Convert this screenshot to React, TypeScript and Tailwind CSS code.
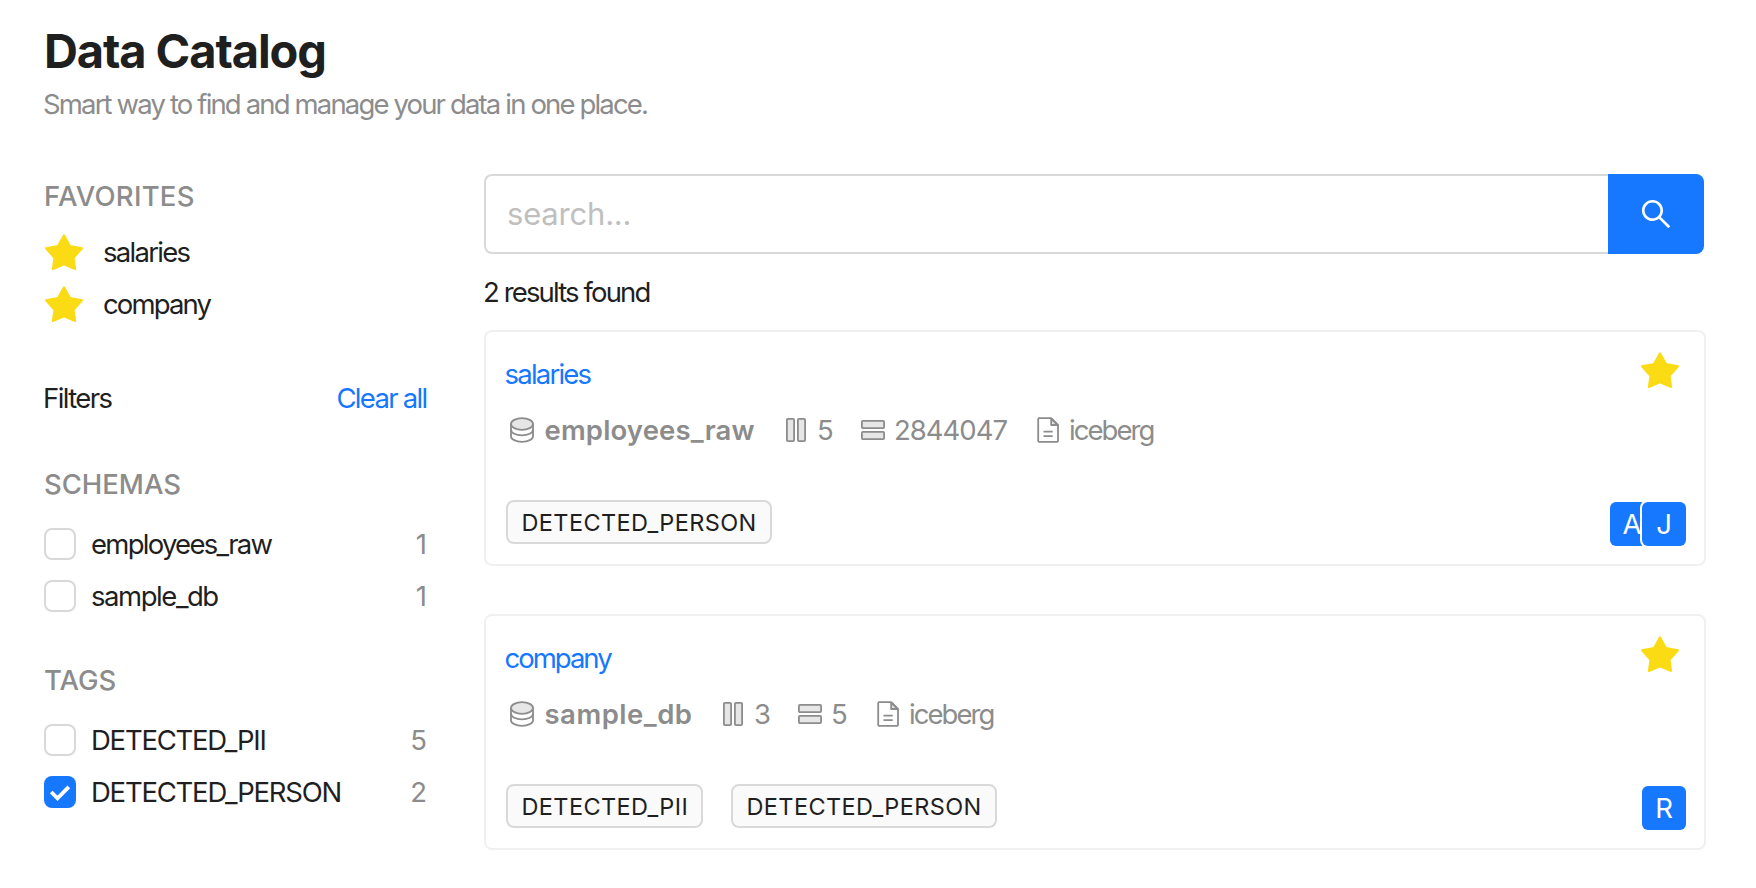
import { AiOutlineSearch } from "react-icons/ai";

function Star() {
  return (
    <svg className="h-9 w-[38px] shrink-0" viewBox="0 0 38 36">
      <path
        d="M19 1.3L25 12L37 14.3L28.6 23.8L30.1 35L19 30.4L7.9 35L9.4 23.8L1 14.3L13 12Z"
        fill="#fadb14"
        stroke="#fadb14"
        strokeWidth="2"
        strokeLinejoin="round"
      />
    </svg>
  );
}

function DatabaseIcon() {
  return (
    <svg className="h-7 w-7 shrink-0" viewBox="0 0 28 28" fill="none" stroke="#8c8c8c" strokeWidth="1.8">
      <path d="M3 8V20.2C3 23.3 7.9 25.8 14 25.8S25 23.3 25 20.2V8" />
      <path d="M3 13.8C3 16.9 7.9 19.3 14 19.3S25 16.9 25 13.8" />
      <ellipse cx="14" cy="8" rx="11" ry="5.8" fill="#e6e6e6" />
    </svg>
  );
}

function ColumnsIcon() {
  return (
    <svg className="h-7 w-7 shrink-0" viewBox="0 0 28 28" fill="#e6e6e6" stroke="#8c8c8c" strokeWidth="1.8">
      <rect x="4.9" y="2.9" width="7.2" height="22.2" rx="1" />
      <rect x="15.9" y="2.9" width="7.2" height="22.2" rx="1" />
    </svg>
  );
}

function RowsIcon() {
  return (
    <svg className="h-7 w-7 shrink-0" viewBox="0 0 28 28" fill="#e6e6e6" stroke="#8c8c8c" strokeWidth="1.8">
      <rect x="2.9" y="4.9" width="22.2" height="7.2" rx="1" />
      <rect x="2.9" y="15.9" width="22.2" height="7.2" rx="1" />
    </svg>
  );
}

function FileIcon() {
  return (
    <svg className="h-7 w-7 shrink-0" viewBox="0 0 28 28" fill="none" stroke="#8c8c8c" strokeWidth="1.8" strokeLinejoin="round">
      <path d="M4.2 2.2H17.2L24 9V24.9Q24 25.8 23.1 25.8H5.1Q4.2 25.8 4.2 24.9V3.1Q4.2 2.2 5.1 2.2" />
      <path d="M17.2 2.6V9H23.6Z" fill="#e6e6e6" />
      <path d="M9.5 15.6H18.7M9.5 20.2H18.7" />
    </svg>
  );
}

function Favorite({ name, tracking }: { name: string; tracking: string }) {
  return (
    <li className="flex h-11 items-center pl-px">
      <Star />
      <span className={`ml-5 ${tracking}`}>{name}</span>
    </li>
  );
}

function FilterOption({
  name,
  count,
  tracking,
  checked = false,
}: {
  name: string;
  count: number;
  tracking: string;
  checked?: boolean;
}) {
  return (
    <li className="flex h-11 items-center">
      {checked ? (
        <span className="h-8 w-8 rounded-lg bg-[#1677ff]">
          <svg viewBox="0 0 32 32" fill="none" stroke="#fff" strokeWidth="3.8">
            <path d="M7.2 16L13.5 22.4L24.8 10.8" />
          </svg>
        </span>
      ) : (
        <span className="h-8 w-8 rounded-lg border-2 border-[#d9d9d9] bg-white" />
      )}
      <span className={`ml-[15px] ${tracking}`}>{name}</span>
      <span className="mr-px ml-auto text-[#8c8c8c]">{count}</span>
    </li>
  );
}

function SectionTitle({ children, className = "" }: { children: string; className?: string }) {
  return <h2 className={`font-medium text-[#8c8c8c] ${className}`}>{children}</h2>;
}

type Tag = { name: string; style: string };

type Dataset = {
  name: string;
  nameTracking: string;
  schema: string;
  schemaStyle: string;
  schemaTracking: string;
  columns: number;
  rows: number;
  rowsStyle: string;
  tags: Tag[];
  owners: string[];
};

const PII: Tag = { name: "DETECTED_PII", style: "w-[197px]" };
const PERSON: Tag = { name: "DETECTED_PERSON", style: "w-[266px]" };

const datasets: Dataset[] = [
  {
    name: "salaries",
    nameTracking: "tracking-[-1.78px]",
    schema: "employees_raw",
    schemaStyle: "w-[274px]",
    schemaTracking: "tracking-[0.15px]",
    columns: 5,
    rows: 2844047,
    rowsStyle: "w-[175px] tracking-[-1px]",
    tags: [PERSON],
    owners: ["A", "J"],
  },
  {
    name: "company",
    nameTracking: "tracking-[-2px]",
    schema: "sample_db",
    schemaStyle: "w-[211px]",
    schemaTracking: "tracking-[0.5px]",
    columns: 3,
    rows: 5,
    rowsStyle: "w-[78px]",
    tags: [PII, PERSON],
    owners: ["R"],
  },
];

function DatasetCard({ data }: { data: Dataset }) {
  return (
    <article className="flex h-[236px] justify-between rounded-lg border-2 border-[#f0f0f0] py-5 pr-[18px] pl-5">
      <div>
        <h3 className={`-ml-[1.5px] text-[#1677ff] ${data.nameTracking}`}>{data.name}</h3>
        <div className="mt-3 flex h-11 items-center pl-0.5 text-[#8c8c8c]">
          <div className={`flex items-center gap-[8.5px] ${data.schemaStyle}`}>
            <DatabaseIcon />
            <span className={`font-semibold ${data.schemaTracking}`}>{data.schema}</span>
          </div>
          <div className="flex w-[77px] items-center gap-[7px]">
            <ColumnsIcon />
            <span>{data.columns}</span>
          </div>
          <div className={`flex items-center gap-[7px] ${data.rowsStyle}`}>
            <RowsIcon />
            <span>{data.rows}</span>
          </div>
          <div className="flex items-center gap-[7px]">
            <FileIcon />
            <span className="tracking-[-1.95px]">iceberg</span>
          </div>
        </div>
        <div className="mt-12 flex gap-7">
          {data.tags.map((tag) => (
            <span
              key={tag.name}
              className={`h-11 rounded-lg border-2 border-[#d9d9d9] bg-[#fafafa] pl-[13.5px] text-[23.5px] leading-[42px] tracking-[0.38px] ${tag.style}`}
            >
              {tag.name}
            </span>
          ))}
        </div>
      </div>
      <div className="flex flex-col items-end justify-between">
        <div className="mr-[7px]">
          <Star />
        </div>
        <div className="-mb-0.5 flex">
          {data.owners.map((owner) => (
            <span
              key={owner}
              className="-ml-3 h-11 w-11 rounded-md bg-[#1677ff] text-center text-white ring-2 ring-white"
            >
              {owner}
            </span>
          ))}
        </div>
      </div>
    </article>
  );
}

export default function App() {
  return (
    <div className="h-[888px] bg-white pt-[21px] pr-[50px] pl-11 font-[Inter,sans-serif] text-[27.5px] leading-[44px] text-[#1f1f1f]">
      <header>
        <h1 className="text-[47px] leading-[60px] font-bold tracking-[-1.1px]">Data Catalog</h1>
        <p className="mt-px -ml-px tracking-[-1.85px] text-[#8c8c8c]">
          Smart way to find and manage your data in one place.
        </p>
      </header>

      <div className="mt-12 flex">
        <aside className="w-96 shrink-0">
          <SectionTitle className="tracking-[0.25px]">FAVORITES</SectionTitle>
          <ul className="mt-3 flex flex-col gap-2">
            <Favorite name="salaries" tracking="tracking-[-1.72px]" />
            <Favorite name="company" tracking="tracking-[-1.88px]" />
          </ul>

          <div className="mt-[50px] flex justify-between">
            <span className="-ml-px tracking-[-1.6px]">Filters</span>
            <a className="mr-[1.5px] tracking-[-1.7px] text-[#1677ff]">Clear all</a>
          </div>

          <SectionTitle className="mt-[42px] tracking-[-0.04px]">SCHEMAS</SectionTitle>
          <ul className="mt-4 flex flex-col gap-2">
            <FilterOption name="employees_raw" count={1} tracking="tracking-[-1.73px]" />
            <FilterOption name="sample_db" count={1} tracking="tracking-[-1.45px]" />
          </ul>

          <SectionTitle className="mt-10 tracking-[-0.08px]">TAGS</SectionTitle>
          <ul className="mt-4 flex flex-col gap-2">
            <FilterOption name="DETECTED_PII" count={5} tracking="tracking-[-1.25px]" />
            <FilterOption name="DETECTED_PERSON" count={2} tracking="tracking-[-1.23px]" checked />
          </ul>
        </aside>

        <main className="ml-14 min-w-0 flex-1">
          <div className="mr-0.5 flex h-20">
            <input
              placeholder="search..."
              className="min-w-0 flex-1 rounded-l-lg border-2 border-r-0 border-[#d9d9d9] pl-[21px] text-[31px] tracking-[-0.2px] outline-none placeholder:text-[#bfbfbf]"
            />
            <button aria-label="search" className="flex w-24 items-center justify-center rounded-r-lg bg-[#1677ff] text-white">
              <AiOutlineSearch className="h-9 w-9" />
            </button>
          </div>
          <p className="mt-4 -ml-px tracking-[-1.87px]">2 results found</p>
          <div className="mt-4 flex flex-col gap-12">
            {datasets.map((data) => (
              <DatasetCard key={data.name} data={data} />
            ))}
          </div>
        </main>
      </div>
    </div>
  );
}
